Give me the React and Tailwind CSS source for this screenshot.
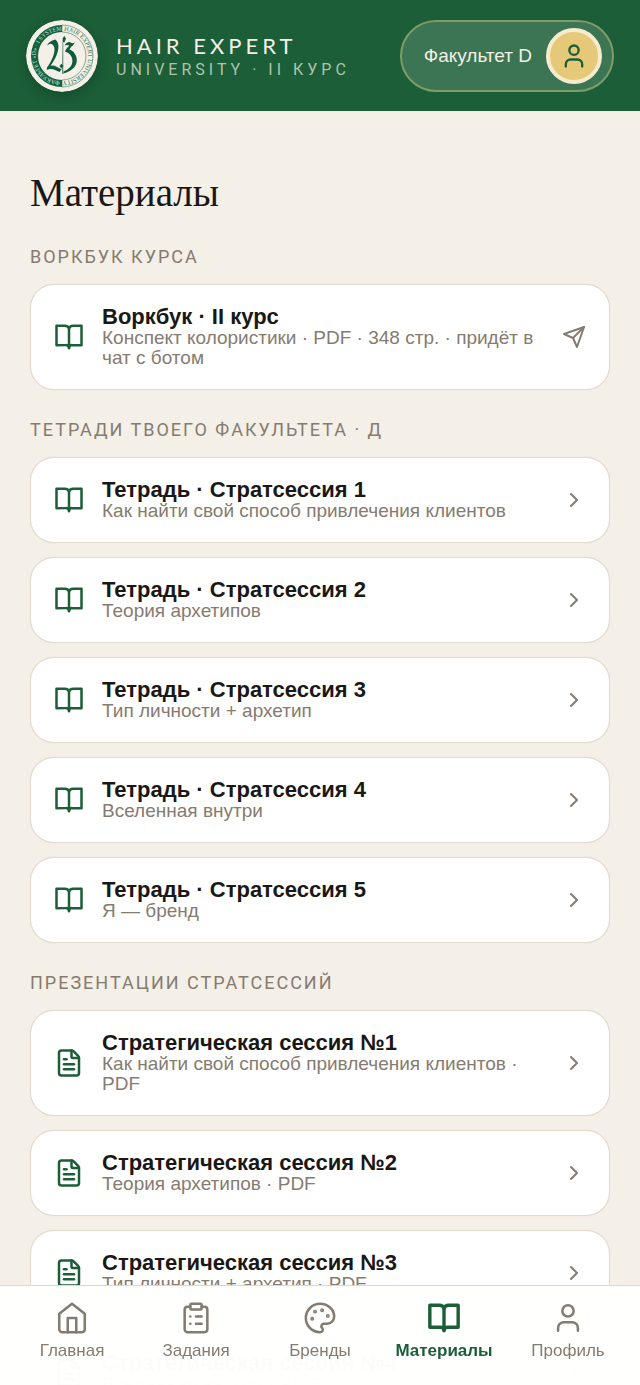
import React from "react";
import { BookOpen, ChevronRight, ClipboardList, FileText, Palette, User } from "lucide-react";

const sections = [
  {
    title: "Воркбук курса",
    icon: "book",
    items: [
      { title: "Воркбук · II курс", note: "Конспект колористики · PDF · 348 стр. · придёт в чат с ботом", send: true },
    ],
  },
  {
    title: "Тетради твоего факультета · Д",
    icon: "book",
    items: [
      { title: "Тетрадь · Стратсессия 1", note: "Как найти свой способ привлечения клиентов" },
      { title: "Тетрадь · Стратсессия 2", note: "Теория архетипов" },
      { title: "Тетрадь · Стратсессия 3", note: "Тип личности + архетип" },
      { title: "Тетрадь · Стратсессия 4", note: "Вселенная внутри" },
      { title: "Тетрадь · Стратсессия 5", note: "Я — бренд" },
    ],
  },
  {
    title: "Презентации стратсессий",
    icon: "file",
    items: [
      { title: "Стратегическая сессия №1", note: "Как найти свой способ привлечения клиентов · PDF" },
      { title: "Стратегическая сессия №2", note: "Теория архетипов · PDF" },
      { title: "Стратегическая сессия №3", note: "Тип личности + архетип · PDF" },
      { title: "Стратегическая сессия №4", note: "Вселенная внутри · PDF" },
    ],
  },
];

function HomeIcon({ size = 24, strokeWidth = 2 }) {
  return (
    <svg width={size} height={size} viewBox="0 0 24 24" fill="none" stroke="currentColor" strokeWidth={strokeWidth} strokeLinecap="round" strokeLinejoin="round" aria-hidden="true">
      <path d="m3 9 9-7 9 7v11a2 2 0 0 1-2 2H5a2 2 0 0 1-2-2z" />
      <path d="M9 22V12h6v10" />
    </svg>
  );
}

function BookIcon({ size = 24, strokeWidth = 2, className }) {
  return (
    <svg width={size} height={size} viewBox="0 0 24 24" fill="none" stroke="currentColor" strokeWidth={strokeWidth} strokeLinecap="round" strokeLinejoin="round" className={className} aria-hidden="true">
      <path d="M12 5.5v15.5" />
      <path d="M2 3h6.5A3.5 3 0 0 1 12 5.5 3.5 3 0 0 1 15.500 3H22v15.500h-7.500A2.500 2.500 0 0 0 12 20.500 2.500 2.500 0 0 0 9.500 18.500H2z" />
    </svg>
  );
}

function SendIcon({ size = 24 }) {
  return (
    <svg width={size} height={size} viewBox="0 0 24 24" fill="none" stroke="currentColor" strokeWidth="2" strokeLinecap="round" strokeLinejoin="round" aria-hidden="true">
      <path d="m22 2-7 20-4-9-9-4Z" />
      <path d="M22 2 11 13" />
    </svg>
  );
}

const tabs = [
  { label: "Главная", Icon: HomeIcon },
  { label: "Задания", Icon: ClipboardList },
  { label: "Бренды", Icon: Palette },
  { label: "Материалы", Icon: BookIcon, active: true },
  { label: "Профиль", Icon: User },
];

function Logo() {
  return (
    <svg viewBox="0 0 72 72" className="size-18 shrink-0 rounded-full shadow-[0_4px_12px_rgba(0,0,0,0.2)]" role="img" aria-label="Hair Expert University">
      <defs>
        <path id="ring-left" d="M35 61.2A25.2 25.2 0 0 1 35 10.800" />
        <path id="ring-right" d="M37 10.800A25.200 25.200 0 0 1 37 61.200" />
      </defs>
      <circle cx="36" cy="36" r="36" fill="#f4efe7" />
      <path d="M36 5A31 31 0 0 0 36 67V60A24 24 0 0 1 36 12Z" fill="#12623f" />
      <path d="M36 5A31 31 0 0 1 36 67V60A24 24 0 0 0 36 12Z" fill="none" stroke="#12623f" strokeWidth="0.5" />
      <text fontSize="6" fontFamily="Liberation Serif, serif" fill="#d5e2d5">
        <textPath href="#ring-left" startOffset="1">ФАКУЛЬТЕТ «D» · I SYSTEM</textPath>
      </text>
      <text fontSize="6.2" fontFamily="Liberation Serif, serif" fill="#2c7152">
        <textPath href="#ring-right" startOffset="1">HAIR EXPERT UNIVERSITY</textPath>
      </text>
      <g fill="#125c3b">
        <path d="M21 25.5C22 22.5 25.5 20.5 29 19.5C32.5 21.5 33.2 26 31.8 31.5C30.6 36.5 27.5 41.5 24.5 45.8C28 44.6 31 47.2 35.7 49.2L33.5 52C29 50.5 26 47.6 20.8 50L21 47.6C25 42 28.2 35.5 28.5 30C28.7 26.5 27 24 24.5 23.7C23 23.8 22 24.8 21 25.5Z" />
        <path d="M38.6 25.5C40 22.6 43 21 45 22.7C46.2 23.4 47.5 23.2 48.7 22.5C47.5 26 44.8 26.2 43.5 29.5C46.8 30.5 50 34 50.7 38.5C51.5 44.5 48 50.5 37.5 53.5V51.5C43.5 48.8 46.3 45.8 46.4 41C46.5 36.5 43.8 33.2 39 31.5C40 28.5 42 27.4 43.3 25.5C41.6 24.7 40 24.7 38.6 25.5Z" />
        <path d="M36.7 18.2 38.3 16 40 18.5 38.4 22.5 37.2 22V54L36.3 54Z" />
        <path d="m35.5 43.8 2 2.3-2 2.3-2-2.3Z" />
      </g>
    </svg>
  );
}

function MaterialCard({ item, icon }) {
  const Icon = icon === "book" ? BookIcon : FileText;
  return (
    <li>
      <button type="button" className="flex w-full items-center gap-[18px] rounded-3xl border border-[#e3d9cc] bg-white px-[23px] py-[21px] text-left shadow-[0_0_1px_#e3d9cc]">
        <Icon size={30} className="shrink-0 text-[#1b5e38]" aria-hidden="true" />
        <span className="min-w-0 flex-1">
          <span className="block text-[22px] leading-[22px] font-bold text-[#1a1815]">{item.title}</span>
          <span className="block text-[19px] leading-5 text-[#857b70]">{item.note}</span>
        </span>
        <span className="shrink-0 text-[#857b70]">
          {item.send ? <SendIcon size={24} /> : <ChevronRight size={24} aria-hidden="true" />}
        </span>
      </button>
    </li>
  );
}

export default function App() {
  return (
    <div className="flex h-screen flex-col bg-[#f4efe7] font-['Liberation_Sans',Arial,sans-serif]">
      <header className="flex shrink-0 items-center justify-between gap-4 bg-[#1b5e38] px-[26px] pt-5 pb-[19px]">
        <div className="flex items-center gap-[18px]">
          <Logo />
          <div>
            <p className="font-['Lato',sans-serif] text-[22px] leading-7 tracking-[4px] whitespace-nowrap text-[#f4efe7]">HAIR EXPERT</p>
            <p className="font-['Roboto',sans-serif] text-[16px] leading-5 tracking-[4px] whitespace-nowrap text-[#adc5ae]">UNIVERSITY · II КУРС</p>
          </div>
        </div>
        <button type="button" className="flex h-18 shrink-0 items-center gap-3.5 rounded-full border-2 border-[#7f9c68] bg-[#3c7554] pr-2.5 pl-[22px] text-[19px] text-[#f4efe7]">
          <span>Факультет D</span>
          <span className="flex size-14 items-center justify-center rounded-full border-4 border-[#f5ebcd] bg-[#e6c879] text-[#1b5e38]">
            <User size={28} aria-hidden="true" />
          </span>
        </button>
      </header>

      <main className="min-h-0 flex-1 overflow-y-auto px-[30px] pt-14 pb-[120px] [scrollbar-width:none]">
        <h1 className="font-['Liberation_Serif',serif] text-[39px] leading-[52px] text-[#1a1815]">Материалы</h1>
        {sections.map((section) => (
          <section key={section.title} className="mt-[29px] first-of-type:mt-[27px]">
            <h2 className="font-['Roboto',sans-serif] text-[18px] leading-[22px] tracking-[2px] text-[#857b70] uppercase">{section.title}</h2>
            <ul className="mt-4 flex flex-col gap-3.5">
              {section.items.map((item) => (
                <MaterialCard key={item.title} item={item} icon={section.icon} />
              ))}
            </ul>
          </section>
        ))}
      </main>

      <nav className="fixed inset-x-0 bottom-0 grid h-[100px] grid-cols-5 border-t border-[#e0d7c9] bg-[#fffffe]/99 px-2.5 pt-[15px]" aria-label="Основная навигация">
        {tabs.map(({ label, Icon, active }) => (
          <a
            key={label}
            href="#"
            aria-current={active ? "page" : undefined}
            className={`flex flex-col items-center gap-1.5 text-[17px] leading-5 ${active ? "font-bold text-[#1b5e38]" : "text-[#857b70]"}`}
          >
            <Icon size={34} strokeWidth={active ? 2.4 : 1.8} aria-hidden="true" />
            <span>{label}</span>
          </a>
        ))}
      </nav>
    </div>
  );
}
